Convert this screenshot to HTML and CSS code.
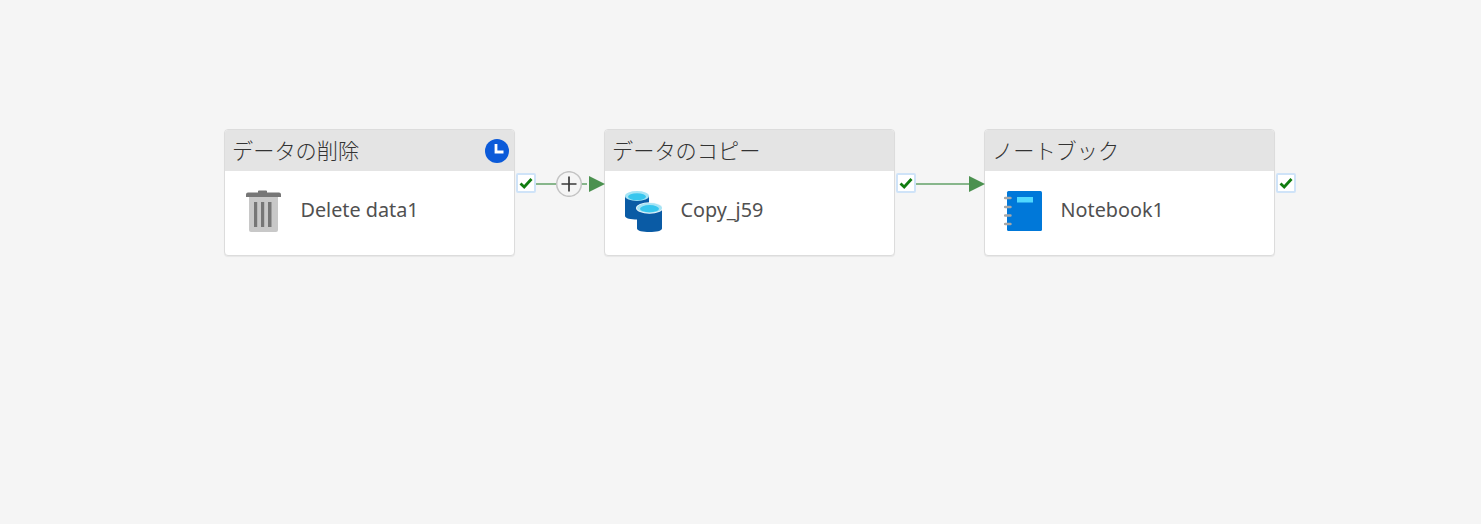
FILE: index.html
```html
<!DOCTYPE html>
<html lang="ja">
<head>
<meta charset="utf-8">
<title>Pipeline</title>
<link rel="stylesheet" href="styles.css">
</head>
<body>
<main class="canvas">
  <section class="node">
    <header class="node-head"><span class="node-type">データの削除</span>
      <svg class="clock" viewBox="0 0 24 24"><circle cx="12" cy="12" r="12" fill="#0b5ad9"/><path d="M11 5V13H18.500" fill="none" stroke="#fff" stroke-width="2.800"/></svg>
    </header>
    <div class="node-body">
      <svg class="node-icon" viewBox="0 0 38 42"><path d="M5 7H34V40Q34 42 32 42H7Q5 42 5 40Z" fill="#c8c8c8"/><path d="M2 4.500Q2 2.500 4 2.500H14V1Q14 .5 15 .5H22Q23 .5 23 1V2.500H35Q37 2.500 37 4.500V7H2Z" fill="#767676"/><path d="M10 12H13.200V37H10ZM17 12H20.200V37H17ZM24 12H27.500V37H24Z" fill="#767676"/></svg>
      <span class="node-name">Delete data1</span>
    </div>
  </section>
  <div class="link">
    <span class="status"><svg class="check" viewBox="0 0 14 12"><path d="M1.500 6.500L5.200 10L12.500 2" fill="none" stroke="#107c10" stroke-width="2.800"/></svg></span>
    <svg class="wire" viewBox="0 0 90 26"><path d="M20 13H72" stroke="#62a067" stroke-width="1.500"/><path d="M74 5L90 13L74 21Z" fill="#4b914f"/><circle cx="54" cy="13" r="12.300" fill="#f5f5f5" stroke="#c4c4c4" stroke-width="1.500"/><path d="M54 5.500V20.500M46.500 13H61.500" stroke="#3a3a3a" stroke-width="1.700"/></svg>
  </div>
  <section class="node">
    <header class="node-head"><span class="node-type">データのコピー</span></header>
    <div class="node-body">
      <svg class="node-icon" viewBox="0 0 38 42"><path d="M1 6V26C1 28.500 7 29.500 13 29.500C19 29.500 25 28.500 25 26V6Z" fill="#0a5ba5"/><ellipse cx="13" cy="6" rx="12" ry="5" fill="#a6e4f5"/><ellipse cx="13" cy="6.700" rx="9" ry="3.500" fill="#38c6ee"/><path d="M13 18V38.500C13 41 19 42 25.500 42C32 42 38 41 38 38.500V18Z" fill="#0a5ba5"/><ellipse cx="25.500" cy="18" rx="13.500" ry="5.800" fill="#f5f8fb"/><ellipse cx="25.500" cy="18" rx="12.500" ry="5" fill="#a6e4f5"/><ellipse cx="25.500" cy="18.700" rx="9.500" ry="3.600" fill="#38c6ee"/></svg>
      <span class="node-name">Copy_j59</span>
    </div>
  </section>
  <div class="link">
    <span class="status"><svg class="check" viewBox="0 0 14 12"><path d="M1.500 6.500L5.200 10L12.500 2" fill="none" stroke="#107c10" stroke-width="2.800"/></svg></span>
    <svg class="wire" viewBox="0 0 90 26"><path d="M20 13H76" stroke="#62a067" stroke-width="1.500"/><path d="M74 5L90 13L74 21Z" fill="#4b914f"/></svg>
  </div>
  <section class="node">
    <header class="node-head"><span class="node-type">ノートブック</span></header>
    <div class="node-body">
      <svg class="node-icon" viewBox="0 0 38 42"><rect x="3" y="1" width="35" height="40" rx="1.500" fill="#0078d9"/><rect x="13" y="7" width="16" height="5.500" fill="#50d9ff"/><path d="M1 8H6.500M1 17H6.500M1 25.500H6.500M1 34H6.500" stroke="#a8a8a8" stroke-width="2.400" stroke-linecap="round"/></svg>
      <span class="node-name">Notebook1</span>
    </div>
  </section>
  <div class="link link-end">
    <span class="status"><svg class="check" viewBox="0 0 14 12"><path d="M1.500 6.500L5.200 10L12.500 2" fill="none" stroke="#107c10" stroke-width="2.800"/></svg></span>
  </div>
</main>
</body>
</html>
```
FILE: styles.css
```css
* { box-sizing: border-box; }
html, body { margin: 0; height: 100%; }
body {
  background: #f5f5f5;
  font-family: "Noto Sans", "Noto Sans CJK JP", sans-serif;
  overflow: hidden;
}
.canvas {
  display: flex;
  align-items: flex-start;
  padding: 129px 0 0 224px;
}
.node {
  width: 291px;
  height: 127px;
  flex: none;
  background: #fff;
  border: 1px solid #dcdcdc;
  border-radius: 4px;
  box-shadow: 0 1px 1px rgba(0,0,0,.06);
  overflow: hidden;
}
.node-head {
  height: 41px;
  background: #e4e4e4;
  display: flex;
  align-items: center;
  justify-content: space-between;
  padding: 0 5px 2px 7px;
}
.node-type {
  font-family: "Noto Sans CJK JP", "Noto Sans", sans-serif;
  font-size: 21.200px;
  font-weight: 300;
  color: #333;
  white-space: nowrap;
}
.clock { width: 24px; height: 24px; display: block; margin-top: 2px; }
.node-body {
  display: flex;
  align-items: center;
  height: 84px;
  padding: 0 0 4px 19px;
  gap: 18.500px;
}
.node-icon { width: 38px; height: 42px; flex: none; display: block; }
.node-name {
  font-size: 19.800px;
  color: #505050;
  white-space: nowrap;
  margin-bottom: 3px;
}
.link {
  position: relative;
  width: 89px;
  height: 26px;
  margin-top: 41px;
  flex: none;
  z-index: 1;
}
.link-end { width: 30px; }
.wire {
  position: absolute;
  left: 0;
  top: 1px;
  width: 90px;
  height: 26px;
}
.status {
  position: absolute;
  left: 1px;
  top: 3px;
  width: 20px;
  height: 20px;
  background: #fff;
  border: 2px solid #cfe3f8;
  border-radius: 2px;
  display: flex;
  align-items: center;
  justify-content: center;
  z-index: 2;
}
.check { width: 14px; height: 12px; display: block; flex: none; }
```
